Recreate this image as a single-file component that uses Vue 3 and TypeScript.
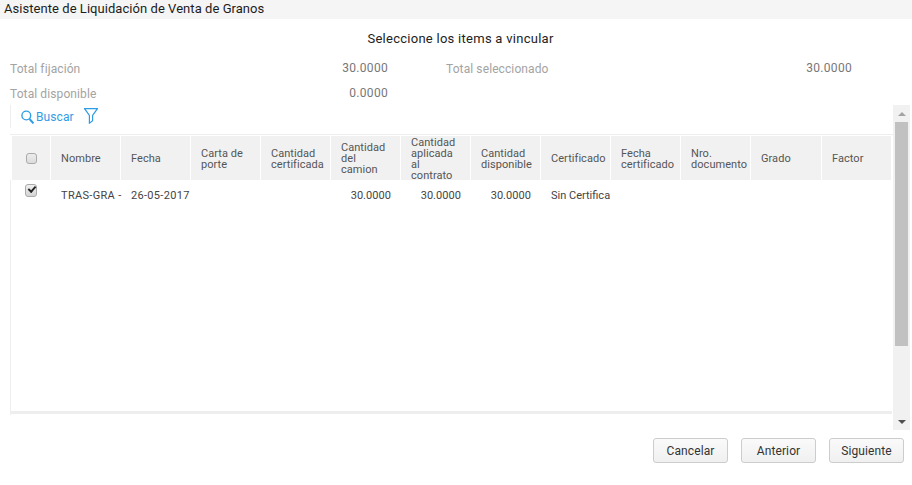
<script setup lang="ts">
interface Col { label: string; width: number }
const cols: Col[] = [
  { label: 'Nombre', width: 70 },
  { label: 'Fecha', width: 70 },
  { label: 'Carta de porte', width: 70 },
  { label: 'Cantidad certificada', width: 70 },
  { label: 'Cantidad del camion', width: 70 },
  { label: 'Cantidad aplicada al contrato', width: 70 },
  { label: 'Cantidad disponible', width: 70 },
  { label: 'Certificado', width: 70 },
  { label: 'Fecha certificado', width: 70 },
  { label: 'Nro. documento', width: 70 },
  { label: 'Grado', width: 71 },
  { label: 'Factor', width: 70 },
]
const row = [
  { t: 'TRAS-GRA -', r: false, tight: false },
  { t: '26-05-2017', r: false, tight: false },
  { t: '', r: false, tight: false },
  { t: '', r: false, tight: false },
  { t: '30.0000', r: true, tight: false },
  { t: '30.0000', r: true, tight: false },
  { t: '30.0000', r: true, tight: false },
  { t: 'Sin Certifica', r: false, tight: true },
  { t: '', r: false, tight: false },
  { t: '', r: false, tight: false },
  { t: '', r: false, tight: false },
  { t: '', r: false, tight: false },
]
</script>

<template>
  <div class="page">
    <header class="title">Asistente de Liquidación de Venta de Granos</header>
    <h2 class="sub">Seleccione los items a vincular</h2>
    <div class="totals">
      <div class="tline">
        <span class="tlabel">Total fijación</span>
        <span class="tval v1">30.0000</span>
        <span class="tlabel second">Total seleccionado</span>
        <span class="tval v2">30.0000</span>
      </div>
      <div class="tline">
        <span class="tlabel">Total disponible</span>
        <span class="tval v1">0.0000</span>
      </div>
    </div>
    <div class="frame">
      <div class="panel">
        <div class="toolbar">
          <svg class="ic-search" width="13" height="14" viewBox="0 0 13 14" fill="none" stroke="#2f9de6">
            <circle cx="5.3" cy="5.5" r="4.4" stroke-width="1.4" />
            <path d="M8.5 9l4 4.4" stroke-width="2" />
          </svg>
          <span class="buscar">Buscar</span>
          <svg class="ic-filter" width="14" height="16" viewBox="0 0 14 16" fill="none" stroke="#2f9de6" stroke-width="1.2">
            <path d="M.6 .7h12.8L8.6 7.4v5.4L5.4 15.2V7.4z" />
          </svg>
        </div>
        <div class="thead">
          <div class="cell chk"><input type="checkbox" class="cb" /></div>
          <div v-for="c in cols" :key="c.label" class="cell th" :style="{ width: c.width + 'px' }">
            <span>{{ c.label }}</span>
          </div>
        </div>
        <div class="trow">
          <div class="cell chk2"><input type="checkbox" class="cb on" checked /></div>
          <div
            v-for="(c, i) in cols"
            :key="c.label"
            class="cell td"
            :class="{ right: row[i].r, tight: row[i].tight }"
            :style="{ width: c.width + 'px' }"
          >{{ row[i].t }}</div>
        </div>
        <div class="hbar"></div>
      </div>
      <div class="scroll">
        <div class="arrow up"></div>
        <div class="thumb"></div>
        <div class="arrow down"></div>
      </div>
    </div>
    <footer class="actions">
      <button class="btn">Cancelar</button>
      <button class="btn">Anterior</button>
      <button class="btn">Siguiente</button>
    </footer>
  </div>
</template>

<style>
html, body { margin: 0; background: #fff; overflow: hidden; }
</style>

<style scoped>
.page {
  width: 912px;
  height: 485px;
  font-family: Roboto, "Liberation Sans", sans-serif;
  color: #333;
  box-sizing: border-box;
  overflow: hidden;
}
.title {
  height: 19px;
  background: #f5f5f5;
  padding-left: 4px;
  font-size: 13px;
  line-height: 17px;
  letter-spacing: 0.05px;
  color: #1c1c1c;
}
.sub {
  margin: 12px 0 0;
  text-align: center;
  font-weight: 400;
  font-size: 13px;
  line-height: 16px;
  letter-spacing: 0.27px;
  color: #222;
  padding-left: 9px;
}
.totals { margin-top: 14px; padding-left: 10px; }
.tline { display: flex; height: 25px; font-size: 12px; line-height: 16px; }
.tlabel { color: #a3a3a3; width: 300px; letter-spacing: 0.1px; }
.tval { color: #777; text-align: right; letter-spacing: 0.3px; }
.v1 { width: 78px; line-height: 14px; }
.second { margin-left: 58px; width: 300px; }
.v2 { width: 106px; line-height: 14px; }
.frame {
  display: flex;
  margin-left: 10px;
  margin-top: -6px;
  height: 325px;
  width: 900px;
}
.panel { position: relative; width: 883px; height: 310px; }
.panel::before {
  content: "";
  position: absolute;
  left: 0;
  top: 75px;
  bottom: 0;
  width: 1px;
  background: #eee;
}
.toolbar {
  height: 23px;
  margin-bottom: 6px;
  display: flex;
  align-items: center;
  border-left: 1px solid #eee;
  padding-left: 10px;
}
.buscar { color: #2f9de6; font-size: 12px; margin-left: 2px; letter-spacing: 0.1px; }
.ic-filter { margin-left: 10px; margin-top: -1px; }
.thead {
  display: flex;
  height: 45px;
  box-sizing: content-box;
  border-top: 1px solid #eee;
  padding-left: 2px;
  background: #fff;
}
.cell { box-sizing: border-box; font-size: 11px; }
.th {
  background: #f1f1f1;
  border-right: 1px solid #fff;
  border-top: 1px solid #fff;
  padding: 1px 10px 0;
  display: flex;
  align-items: center;
  line-height: 11px;
  color: #555;
  letter-spacing: 0.05px;
}
.th span { display: block; }
.chk {
  width: 39px;
  background: #f1f1f1;
  border-right: 1px solid #fff;
  border-top: 1px solid #fff;
  display: flex;
  align-items: center;
  padding-left: 14px;
}
.cb {
  appearance: none;
  margin: 0;
  box-sizing: border-box;
  width: 11px;
  height: 11px;
  border: 1px solid #aaa;
  border-radius: 3px;
  background: linear-gradient(#ececec, #dcdcdc);
  position: relative;
}
.cb.on {
  width: 12px;
  height: 13px;
  background: linear-gradient(#f0f0f0, #d4d4d4);
}
.cb.on::after {
  content: "";
  position: absolute;
  left: 2px;
  top: 1px;
  width: 6px;
  height: 3px;
  border-left: 2px solid #222;
  border-bottom: 2px solid #222;
  transform: rotate(-48deg) scale(0.95);
}
.trow {
  display: flex;
  height: 31px;
  align-items: flex-start;
  border-left: 1px solid #eee;
  padding-left: 1px;
}
.chk2 { width: 39px; padding: 4px 0 0 13px; height: 20px; }
.td {
  padding: 9px 0 0 10px;
  line-height: 14px;
  white-space: nowrap;
  color: #444;
  letter-spacing: 0.32px;
  height: 28px;
}
.td.tight { letter-spacing: 0; }
.td.right { text-align: right; padding: 9px 10px 0 0; letter-spacing: 0.05px; }
.hbar { height: 3px; background: #eee; margin-top: 200px; width: 882px; }
.scroll {
  width: 17px;
  height: 325px;
  background: #f1f1f1;
  display: flex;
  flex-direction: column;
  align-items: center;
}
.arrow { width: 0; height: 0; border-left: 4px solid transparent; border-right: 4px solid transparent; }
.arrow.up { border-bottom: 4px solid #a3a3a3; margin-top: 7px; margin-bottom: 6px; }
.thumb { width: 13px; height: 224px; background: #c1c1c1; }
.arrow.down { border-top: 4px solid #505050; margin-top: auto; margin-bottom: 6px; }
.actions {
  display: flex;
  justify-content: flex-end;
  gap: 13px;
  margin-top: 8px;
  padding-right: 8px;
}
.btn {
  box-sizing: border-box;
  width: 75px;
  height: 25px;
  border: 1px solid #ccc;
  border-radius: 3px;
  background: linear-gradient(#fafafa, #f0f0f0);
  font-family: Roboto, "Liberation Sans", sans-serif;
  font-size: 12px;
  letter-spacing: 0.12px;
  color: #333;
  padding: 0;
}
</style>
